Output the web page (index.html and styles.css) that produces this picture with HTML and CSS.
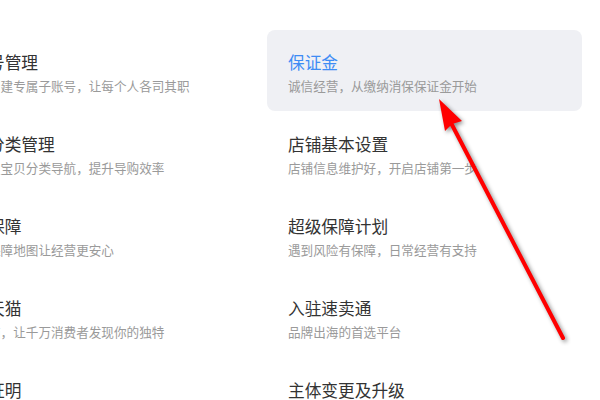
FILE: index.html
```html
<!DOCTYPE html>
<html lang="zh">
  <head>
    <meta charset="UTF-8" />
    <title>店铺服务</title>
    <link rel="stylesheet" href="styles.css">
  </head>
  <body>
    <div class="page">
      <div class="grid">
        <div class="item">
          <div class="title">号管理</div>
          <div class="desc">创建专属子账号，让每个人各司其职</div>
        </div>
        <div class="item active">
          <div class="title">保证金</div>
          <div class="desc">诚信经营，从缴纳消保保证金开始</div>
        </div>
        <div class="item">
          <div class="title">分类管理</div>
          <div class="desc">置宝贝分类导航，提升导购效率</div>
        </div>
        <div class="item">
          <div class="title">店铺基本设置</div>
          <div class="desc">店铺信息维护好，开启店铺第一步</div>
        </div>
        <div class="item">
          <div class="title">保障</div>
          <div class="desc">保障地图让经营更安心</div>
        </div>
        <div class="item">
          <div class="title">超级保障计划</div>
          <div class="desc">遇到风险有保障，日常经营有支持</div>
        </div>
        <div class="item">
          <div class="title">天猫</div>
          <div class="desc">猫，让千万消费者发现你的独特</div>
        </div>
        <div class="item">
          <div class="title">入驻速卖通</div>
          <div class="desc">品牌出海的首选平台</div>
        </div>
        <div class="item">
          <div class="title">证明</div>
          <div class="desc">资质证明材料在线提交</div>
        </div>
        <div class="item">
          <div class="title">主体变更及升级</div>
          <div class="desc">店铺主体信息变更与升级</div>
        </div>
      </div>

      <!-- annotation arrow -->
      <svg class="arrow" width="600" height="400" viewBox="0 0 600 400">
        <line x1="563" y1="338" x2="450" y2="121" stroke="#ff0000" stroke-width="4" stroke-linecap="round" />
        <polygon points="439,99 462,121 452,124 445,131" fill="#ff0000" />
      </svg>
    </div>
  </body>
</html>
```

FILE: styles.css
```css
body {
  margin: 0;
  background: #fff;
  font-family: "Microsoft YaHei", "Noto Sans CJK SC", sans-serif;
}
.page {
  position: relative;
  width: 600px;
  height: 400px;
  overflow: hidden;
}
.grid {
  display: grid;
  grid-template-columns: 285px 315px;
  column-gap: 15px;
  margin-left: -33px;
  padding-top: 30px;
}
.item {
  height: 82px;
  box-sizing: border-box;
  padding: 22px 21px 0;
  border-radius: 8px;
  white-space: nowrap;
}
.item.active {
  height: 81px;
  margin-bottom: 1px;
  background: #eff0f4;
}
.title {
  font-size: 16.7px;
  line-height: 20px;
  color: #333;
}
.active .title {
  color: #3d8cf4;
}
.desc {
  margin-top: 6px;
  font-size: 12.6px;
  line-height: 16px;
  color: #9a9a9a;
}
.arrow {
  position: absolute;
  left: 0;
  top: 0;
  filter: drop-shadow(2px 2px 2px rgba(0, 0, 0, 0.45));
}
```
